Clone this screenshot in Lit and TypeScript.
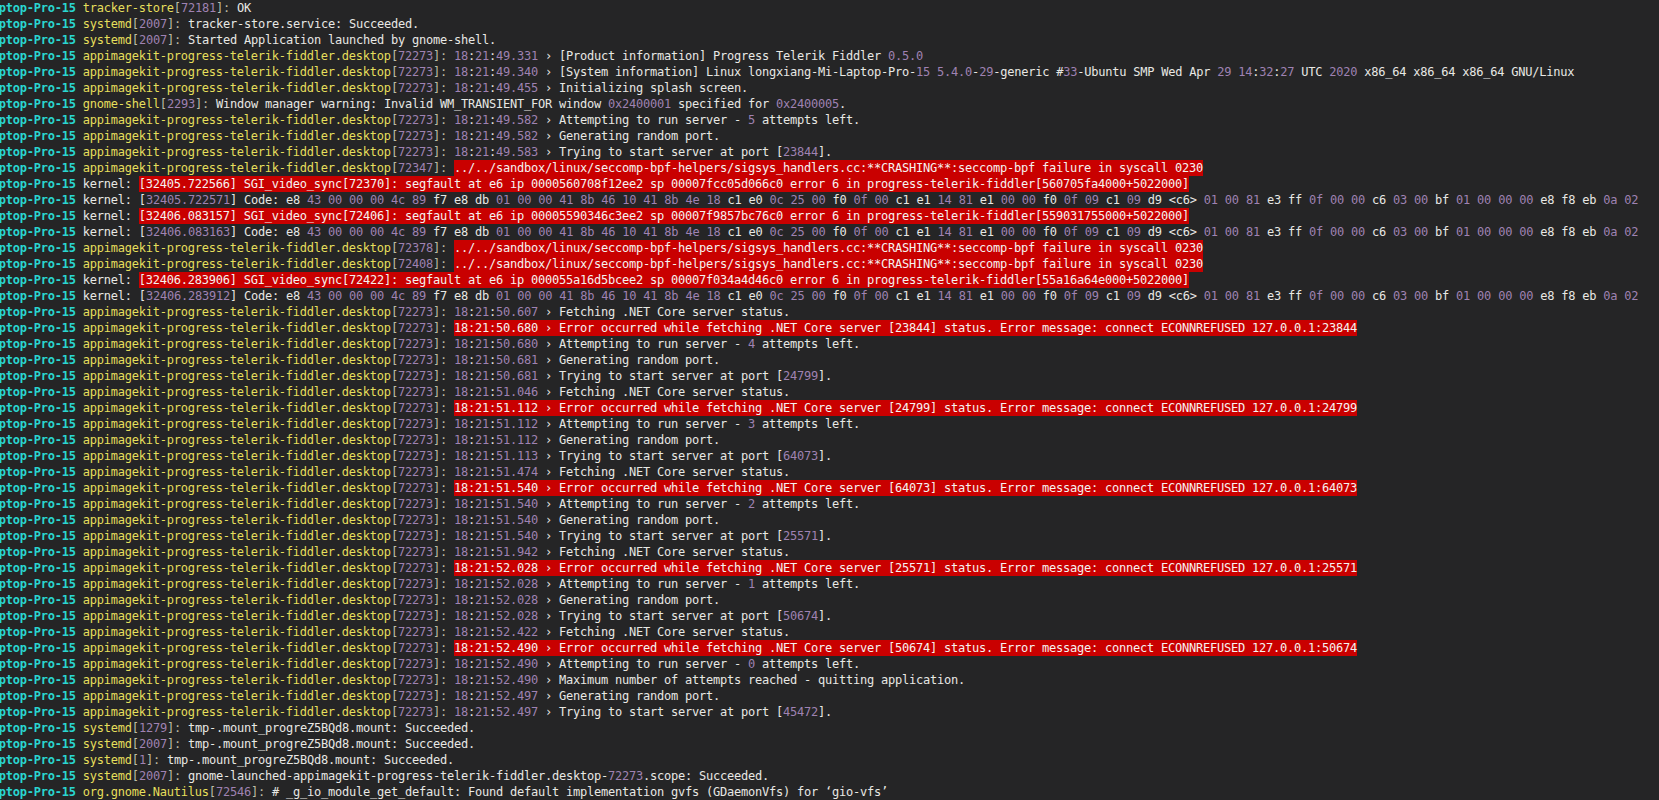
import { LitElement, html, css } from "lit";
import { customElement } from "lit/decorators.js";

type Row = { host: string; pid?: string; head?: string; body: string; alert?: boolean };

const APP = "appimagekit-progress-telerik-fiddler.desktop";
const CODE =
  "Code: e8 43 00 00 00 4c 89 f7 e8 db 01 00 00 41 8b 46 10 41 8b 4e 18 c1 e0 0c 25 00 f0 0f 00 c1 e1 14 81 e1 00 00 f0 0f 09 c1 09 d9 <c6> 01 00 81 e3 ff 0f 00 00 c6 03 00 bf 01 00 00 00 e8 f8 eb 0a 02";
const CRASH =
  "../../sandbox/linux/seccomp-bpf-helpers/sigsys_handlers.cc:**CRASHING**:seccomp-bpf failure in syscall 0230";

const app = (time: string, msg: string): Row => ({ host: APP, pid: "72273", body: `18:21:${time} › ${msg}` });
const refused = (time: string, port: string): Row => ({
  host: APP,
  pid: "72273",
  alert: true,
  body: `18:21:${time} › Error occurred while fetching .NET Core server [${port}] status. Error message: connect ECONNREFUSED 127.0.0.1:${port}`,
});
const crash = (pid: string): Row => ({ host: APP, pid, body: CRASH, alert: true });
const segv = (ts: string, pid: string, ip: string, sp: string, base: string): Row => ({
  host: "kernel",
  alert: true,
  body: `[${ts}] SGI_video_sync[${pid}]: segfault at e6 ip ${ip} sp ${sp} error 6 in progress-telerik-fiddler[${base}+5022000]`,
});
const code = (ts: string): Row => ({ host: "kernel", body: `[${ts}] ${CODE}` });
const sys = (pid: string, body: string): Row => ({ host: "systemd", pid, body });

const attempt = (n: number) => `Attempting to run server - ${n} attempts left.`;
const GEN = "Generating random port.";
const FETCH = "Fetching .NET Core server status.";
const tryPort = (p: string) => `Trying to start server at port [${p}].`;

const ROWS: Row[] = [
  { host: "tracker-store", pid: "72181", body: "OK" },
  sys("2007", "tracker-store.service: Succeeded."),
  sys("2007", "Started Application launched by gnome-shell."),
  app("49.331", "[Product information] Progress Telerik Fiddler 0.5.0"),
  app("49.340", "[System information] Linux longxiang-Mi-Laptop-Pro-15 5.4.0-29-generic #33-Ubuntu SMP Wed Apr 29 14:32:27 UTC 2020 x86_64 x86_64 x86_64 GNU/Linux"),
  app("49.455", "Initializing splash screen."),
  { host: "gnome-shell", pid: "2293", body: "Window manager warning: Invalid WM_TRANSIENT_FOR window 0x2400001 specified for 0x2400005." },
  app("49.582", attempt(5)),
  app("49.582", GEN),
  app("49.583", tryPort("23844")),
  crash("72347"),
  segv("32405.722566", "72370", "0000560708f12ee2", "00007fcc05d066c0", "560705fa4000"),
  code("32405.722571"),
  segv("32406.083157", "72406", "00005590346c3ee2", "00007f9857bc76c0", "559031755000"),
  code("32406.083163"),
  crash("72378"),
  crash("72408"),
  segv("32406.283906", "72422", "000055a16d5bcee2", "00007f034a4d46c0", "55a16a64e000"),
  code("32406.283912"),
  app("50.607", FETCH),
  refused("50.680", "23844"),
  app("50.680", attempt(4)),
  app("50.681", GEN),
  app("50.681", tryPort("24799")),
  app("51.046", FETCH),
  refused("51.112", "24799"),
  app("51.112", attempt(3)),
  app("51.112", GEN),
  app("51.113", tryPort("64073")),
  app("51.474", FETCH),
  refused("51.540", "64073"),
  app("51.540", attempt(2)),
  app("51.540", GEN),
  app("51.540", tryPort("25571")),
  app("51.942", FETCH),
  refused("52.028", "25571"),
  app("52.028", attempt(1)),
  app("52.028", GEN),
  app("52.028", tryPort("50674")),
  app("52.422", FETCH),
  refused("52.490", "50674"),
  app("52.490", attempt(0)),
  app("52.490", "Maximum number of attempts reached - quitting application."),
  app("52.497", GEN),
  app("52.497", tryPort("45472")),
  sys("1279", "tmp-.mount_progreZ5BQd8.mount: Succeeded."),
  sys("2007", "tmp-.mount_progreZ5BQd8.mount: Succeeded."),
  sys("1", "tmp-.mount_progreZ5BQd8.mount: Succeeded."),
  sys("2007", "gnome-launched-appimagekit-progress-telerik-fiddler.desktop-72273.scope: Succeeded."),
  { host: "org.gnome.Nautilus", pid: "72546", body: "# _g_io_module_get_default: Found default implementation gvfs (GDaemonVfs) for ‘gio-vfs’" },
];

const NUM = /(?<![A-Za-z0-9_.])(?:0x[0-9a-f]+|\d+(?:\.\d+)*[0-9a-f]*)(?!\w)/g;

function tint(text: string) {
  const out: unknown[] = [];
  let last = 0;
  for (const m of text.matchAll(NUM)) {
    const i = m.index ?? 0;
    out.push(text.slice(last, i), html`<span class="num">${m[0]}</span>`);
    last = i + m[0].length;
  }
  out.push(text.slice(last));
  return out;
}

@customElement("app-root")
export class AppRoot extends LitElement {
  static styles = css`
    :host {
      display: block;
      width: 1659px;
      height: 800px;
      overflow: hidden;
      background: #252526;
    }
    .log {
      display: flex;
      flex-direction: column;
      margin-left: -1.2px;
      font-family: "DejaVu Sans Mono", monospace;
      font-size: 12px;
      letter-spacing: -0.224px;
      line-height: 16px;
      color: #e8e8e4;
      white-space: pre;
    }
    .row {
      height: 16px;
    }
    .host {
      color: #2ad6d0;
      font-weight: 700;
    }
    .proc {
      color: #e5df5c;
    }
    .punct {
      color: #bdbda6;
    }
    .num {
      color: #9f82b2;
    }
    .alert {
      display: inline-block;
      height: 16px;
      vertical-align: top;
      background: #c90000;
      color: #f6f2f0;
    }
  `;

  private row(r: Row) {
    const body = r.alert ? html`<span class="alert">${r.body}</span>` : tint(r.body);
    const proc =
      r.host === "kernel"
        ? html`kernel: `
        : html`<span class="proc">${r.host}</span><span class="punct">[</span><span class="num">${r.pid}</span><span class="punct">]:</span> `;
    return html`<div class="row"><span class="host">ptop-Pro-15</span> ${proc}${body}</div>`;
  }

  render() {
    return html`<div class="log">${ROWS.map((r) => this.row(r))}</div>`;
  }
}
